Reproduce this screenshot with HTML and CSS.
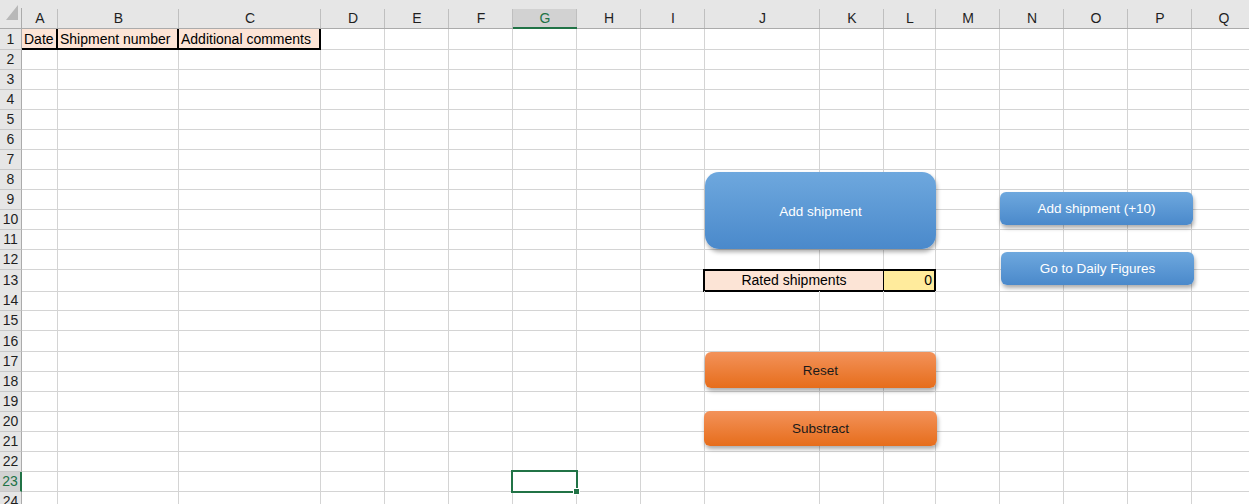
FILE: index.html
```html
<!DOCTYPE html>
<html>
<head>
<meta charset="utf-8">
<title>Shipments</title>
<link rel="stylesheet" href="styles.css">
</head>
<body>
<div class="sheet">
  <div class="row colheads">
    <div class="corner"></div>
    <div class="ch">A</div><div class="ch">B</div><div class="ch">C</div><div class="ch">D</div><div class="ch">E</div><div class="ch">F</div><div class="ch sel">G</div><div class="ch">H</div><div class="ch">I</div><div class="ch">J</div><div class="ch">K</div><div class="ch">L</div><div class="ch">M</div><div class="ch">N</div><div class="ch">O</div><div class="ch">P</div><div class="ch">Q</div>
  </div>
  <div class="row h21"><div class="rh">1</div><div class="hd">Date</div><div class="hd">Shipment number</div><div class="hd">Additional comments</div><div class="c"></div><div class="c"></div><div class="c"></div><div class="c"></div><div class="c"></div><div class="c"></div><div class="c"></div><div class="c"></div><div class="c"></div><div class="c"></div><div class="c"></div><div class="c"></div><div class="c"></div><div class="c"></div></div>
  <div class="row"><div class="rh">2</div><div class="c"></div><div class="c"></div><div class="c"></div><div class="c"></div><div class="c"></div><div class="c"></div><div class="c"></div><div class="c"></div><div class="c"></div><div class="c"></div><div class="c"></div><div class="c"></div><div class="c"></div><div class="c"></div><div class="c"></div><div class="c"></div><div class="c"></div></div>
  <div class="row"><div class="rh">3</div><div class="c"></div><div class="c"></div><div class="c"></div><div class="c"></div><div class="c"></div><div class="c"></div><div class="c"></div><div class="c"></div><div class="c"></div><div class="c"></div><div class="c"></div><div class="c"></div><div class="c"></div><div class="c"></div><div class="c"></div><div class="c"></div><div class="c"></div></div>
  <div class="row"><div class="rh">4</div><div class="c"></div><div class="c"></div><div class="c"></div><div class="c"></div><div class="c"></div><div class="c"></div><div class="c"></div><div class="c"></div><div class="c"></div><div class="c"></div><div class="c"></div><div class="c"></div><div class="c"></div><div class="c"></div><div class="c"></div><div class="c"></div><div class="c"></div></div>
  <div class="row"><div class="rh">5</div><div class="c"></div><div class="c"></div><div class="c"></div><div class="c"></div><div class="c"></div><div class="c"></div><div class="c"></div><div class="c"></div><div class="c"></div><div class="c"></div><div class="c"></div><div class="c"></div><div class="c"></div><div class="c"></div><div class="c"></div><div class="c"></div><div class="c"></div></div>
  <div class="row"><div class="rh">6</div><div class="c"></div><div class="c"></div><div class="c"></div><div class="c"></div><div class="c"></div><div class="c"></div><div class="c"></div><div class="c"></div><div class="c"></div><div class="c"></div><div class="c"></div><div class="c"></div><div class="c"></div><div class="c"></div><div class="c"></div><div class="c"></div><div class="c"></div></div>
  <div class="row"><div class="rh">7</div><div class="c"></div><div class="c"></div><div class="c"></div><div class="c"></div><div class="c"></div><div class="c"></div><div class="c"></div><div class="c"></div><div class="c"></div><div class="c"></div><div class="c"></div><div class="c"></div><div class="c"></div><div class="c"></div><div class="c"></div><div class="c"></div><div class="c"></div></div>
  <div class="row"><div class="rh">8</div><div class="c"></div><div class="c"></div><div class="c"></div><div class="c"></div><div class="c"></div><div class="c"></div><div class="c"></div><div class="c"></div><div class="c"></div><div class="c"></div><div class="c"></div><div class="c"></div><div class="c"></div><div class="c"></div><div class="c"></div><div class="c"></div><div class="c"></div></div>
  <div class="row"><div class="rh">9</div><div class="c"></div><div class="c"></div><div class="c"></div><div class="c"></div><div class="c"></div><div class="c"></div><div class="c"></div><div class="c"></div><div class="c"></div><div class="c"></div><div class="c"></div><div class="c"></div><div class="c"></div><div class="c"></div><div class="c"></div><div class="c"></div><div class="c"></div></div>
  <div class="row"><div class="rh">10</div><div class="c"></div><div class="c"></div><div class="c"></div><div class="c"></div><div class="c"></div><div class="c"></div><div class="c"></div><div class="c"></div><div class="c"></div><div class="c"></div><div class="c"></div><div class="c"></div><div class="c"></div><div class="c"></div><div class="c"></div><div class="c"></div><div class="c"></div></div>
  <div class="row"><div class="rh">11</div><div class="c"></div><div class="c"></div><div class="c"></div><div class="c"></div><div class="c"></div><div class="c"></div><div class="c"></div><div class="c"></div><div class="c"></div><div class="c"></div><div class="c"></div><div class="c"></div><div class="c"></div><div class="c"></div><div class="c"></div><div class="c"></div><div class="c"></div></div>
  <div class="row"><div class="rh">12</div><div class="c"></div><div class="c"></div><div class="c"></div><div class="c"></div><div class="c"></div><div class="c"></div><div class="c"></div><div class="c"></div><div class="c"></div><div class="c"></div><div class="c"></div><div class="c"></div><div class="c"></div><div class="c"></div><div class="c"></div><div class="c"></div><div class="c"></div></div>
  <div class="row h21"><div class="rh">13</div><div class="c"></div><div class="c"></div><div class="c"></div><div class="c"></div><div class="c"></div><div class="c"></div><div class="c"></div><div class="c"></div><div class="c"></div><div class="rated">Rated shipments</div><div class="val">0</div><div class="c"></div><div class="c"></div><div class="c"></div><div class="c"></div><div class="c"></div></div>
  <div class="row"><div class="rh">14</div><div class="c"></div><div class="c"></div><div class="c"></div><div class="c"></div><div class="c"></div><div class="c"></div><div class="c"></div><div class="c"></div><div class="c"></div><div class="c"></div><div class="c"></div><div class="c"></div><div class="c"></div><div class="c"></div><div class="c"></div><div class="c"></div><div class="c"></div></div>
  <div class="row"><div class="rh">15</div><div class="c"></div><div class="c"></div><div class="c"></div><div class="c"></div><div class="c"></div><div class="c"></div><div class="c"></div><div class="c"></div><div class="c"></div><div class="c"></div><div class="c"></div><div class="c"></div><div class="c"></div><div class="c"></div><div class="c"></div><div class="c"></div><div class="c"></div></div>
  <div class="row h21"><div class="rh">16</div><div class="c"></div><div class="c"></div><div class="c"></div><div class="c"></div><div class="c"></div><div class="c"></div><div class="c"></div><div class="c"></div><div class="c"></div><div class="c"></div><div class="c"></div><div class="c"></div><div class="c"></div><div class="c"></div><div class="c"></div><div class="c"></div><div class="c"></div></div>
  <div class="row"><div class="rh">17</div><div class="c"></div><div class="c"></div><div class="c"></div><div class="c"></div><div class="c"></div><div class="c"></div><div class="c"></div><div class="c"></div><div class="c"></div><div class="c"></div><div class="c"></div><div class="c"></div><div class="c"></div><div class="c"></div><div class="c"></div><div class="c"></div><div class="c"></div></div>
  <div class="row"><div class="rh">18</div><div class="c"></div><div class="c"></div><div class="c"></div><div class="c"></div><div class="c"></div><div class="c"></div><div class="c"></div><div class="c"></div><div class="c"></div><div class="c"></div><div class="c"></div><div class="c"></div><div class="c"></div><div class="c"></div><div class="c"></div><div class="c"></div><div class="c"></div></div>
  <div class="row"><div class="rh">19</div><div class="c"></div><div class="c"></div><div class="c"></div><div class="c"></div><div class="c"></div><div class="c"></div><div class="c"></div><div class="c"></div><div class="c"></div><div class="c"></div><div class="c"></div><div class="c"></div><div class="c"></div><div class="c"></div><div class="c"></div><div class="c"></div><div class="c"></div></div>
  <div class="row"><div class="rh">20</div><div class="c"></div><div class="c"></div><div class="c"></div><div class="c"></div><div class="c"></div><div class="c"></div><div class="c"></div><div class="c"></div><div class="c"></div><div class="c"></div><div class="c"></div><div class="c"></div><div class="c"></div><div class="c"></div><div class="c"></div><div class="c"></div><div class="c"></div></div>
  <div class="row"><div class="rh">21</div><div class="c"></div><div class="c"></div><div class="c"></div><div class="c"></div><div class="c"></div><div class="c"></div><div class="c"></div><div class="c"></div><div class="c"></div><div class="c"></div><div class="c"></div><div class="c"></div><div class="c"></div><div class="c"></div><div class="c"></div><div class="c"></div><div class="c"></div></div>
  <div class="row"><div class="rh">22</div><div class="c"></div><div class="c"></div><div class="c"></div><div class="c"></div><div class="c"></div><div class="c"></div><div class="c"></div><div class="c"></div><div class="c"></div><div class="c"></div><div class="c"></div><div class="c"></div><div class="c"></div><div class="c"></div><div class="c"></div><div class="c"></div><div class="c"></div></div>
  <div class="row"><div class="rh sel">23</div><div class="c"></div><div class="c"></div><div class="c"></div><div class="c"></div><div class="c"></div><div class="c"></div><div class="c active"></div><div class="c"></div><div class="c"></div><div class="c"></div><div class="c"></div><div class="c"></div><div class="c"></div><div class="c"></div><div class="c"></div><div class="c"></div><div class="c"></div></div>
  <div class="row"><div class="rh">24</div><div class="c"></div><div class="c"></div><div class="c"></div><div class="c"></div><div class="c"></div><div class="c"></div><div class="c"></div><div class="c"></div><div class="c"></div><div class="c"></div><div class="c"></div><div class="c"></div><div class="c"></div><div class="c"></div><div class="c"></div><div class="c"></div><div class="c"></div></div>

  <div class="btn blue add">Add shipment</div>
  <div class="btn blue add10">Add shipment (+10)</div>
  <div class="btn blue daily">Go to Daily Figures</div>
  <div class="btn orange reset">Reset</div>
  <div class="btn orange subtract">Substract</div>
</div>
</body>
</html>
```

FILE: styles.css
```css
html, body {
  margin: 0;
  padding: 0;
  background: #ffffff;
  overflow: hidden;
}

body {
  font-family: "Liberation Sans", Arial, sans-serif;
  color: #000;
}

.sheet {
  position: relative;
  width: 1256px;
}

.row {
  display: grid;
  grid-template-columns: 22px 36px 121px 142px repeat(6, 64px) 115px 64px 52px repeat(5, 64px);
  height: 20px;
}

.row.h21 {
  height: 21px;
}

.row > div {
  box-sizing: border-box;
}

/* column header strip */
.colheads {
  height: 29px;
  background: #e6e6e6;
}

.corner {
  position: relative;
  border-bottom: 1px solid #ababab;
  background: linear-gradient(#ababab, #ababab) no-repeat right bottom / 1px 20px;
}

.corner::after {
  content: "";
  position: absolute;
  left: 6px;
  top: 5px;
  width: 12px;
  height: 15px;
  background: #b8b8b8;
  clip-path: polygon(100% 0, 100% 100%, 0 100%);
}

.ch {
  padding-top: 9px;
  border-bottom: 1px solid #ababab;
  text-align: center;
  font-size: 14px;
  line-height: 19px;
  color: #1f1f1f;
  background: linear-gradient(#bfbfbf, #bfbfbf) no-repeat right bottom / 1px 19px;
}

.ch.sel {
  color: #217346;
  border-bottom: 2px solid #217346;
  line-height: 18px;
  background:
    linear-gradient(#bfbfbf, #bfbfbf) no-repeat right bottom / 1px 18px,
    linear-gradient(#d2d2d2, #d2d2d2) no-repeat left bottom / 100% 18px;
}

/* row headers */
.rh {
  background: #e6e6e6;
  border-right: 1px solid #ababab;
  border-bottom: 1px solid #c8c8c8;
  text-align: center;
  font-size: 14px;
  line-height: 19px;
  color: #1f1f1f;
}

.h21 .rh {
  line-height: 20px;
}

.rh.sel {
  background: #d2d2d2;
  color: #217346;
  border-right: 2px solid #217346;
}

/* ordinary cells */
.c {
  border-right: 1px solid #d4d4d4;
  border-bottom: 1px solid #d4d4d4;
}

/* header cells of the table (row 1) */
.hd {
  background: #fce4d6;
  border-right: 2px solid #000;
  border-bottom: 2px solid #000;
  font-size: 14px;
  line-height: 19px;
  padding: 1px 0 0 2px;
  white-space: nowrap;
  overflow: hidden;
}

.hd:first-of-type {
  padding-left: 1px;
}

/* rated shipments */
.rated {
  grid-column: span 2;
  margin: -1px -1px 0 -2px;
  border: 2px solid #000;
  background: #fce4d6;
  text-align: center;
  font-size: 14px;
  line-height: 19px;
}

.val {
  margin-top: -1px;
  border: 2px solid #000;
  border-left: 0;
  background: #ffeb9c;
  text-align: right;
  padding-right: 2px;
  font-size: 14px;
  line-height: 19px;
}

/* active cell */
.active {
  position: relative;
}

.active::before {
  content: "";
  position: absolute;
  left: -2px;
  top: -2px;
  width: 67px;
  height: 23px;
  box-sizing: border-box;
  border: 2px solid #217346;
}

.active::after {
  content: "";
  position: absolute;
  left: 60px;
  top: 16px;
  width: 7px;
  height: 7px;
  box-sizing: border-box;
  background: #217346;
  border: 1px solid #ffffff;
}

/* floating shape buttons */
.btn {
  position: absolute;
  display: flex;
  align-items: center;
  justify-content: center;
  box-sizing: border-box;
  font-size: 13.5px;
  border-radius: 6px;
  box-shadow: 1px 3px 4px rgba(0, 0, 0, 0.33);
  white-space: nowrap;
}

.blue {
  background: linear-gradient(#6ea8de, #4a89cb);
  color: #ffffff;
}

.orange {
  background: linear-gradient(#f3925a, #e66d1b);
  color: #1a1a1a;
}

.add {
  left: 705px;
  top: 172px;
  width: 231px;
  height: 77px;
  border-radius: 14px;
  padding-top: 2px;
}

.add10 {
  left: 1000px;
  top: 192px;
  width: 193px;
  height: 33px;
}

.daily {
  left: 1001px;
  top: 252px;
  width: 193px;
  height: 33px;
}

.reset {
  left: 705px;
  top: 352px;
  width: 231px;
  height: 36px;
}

.subtract {
  left: 704px;
  top: 411px;
  width: 233px;
  height: 35px;
}
```
